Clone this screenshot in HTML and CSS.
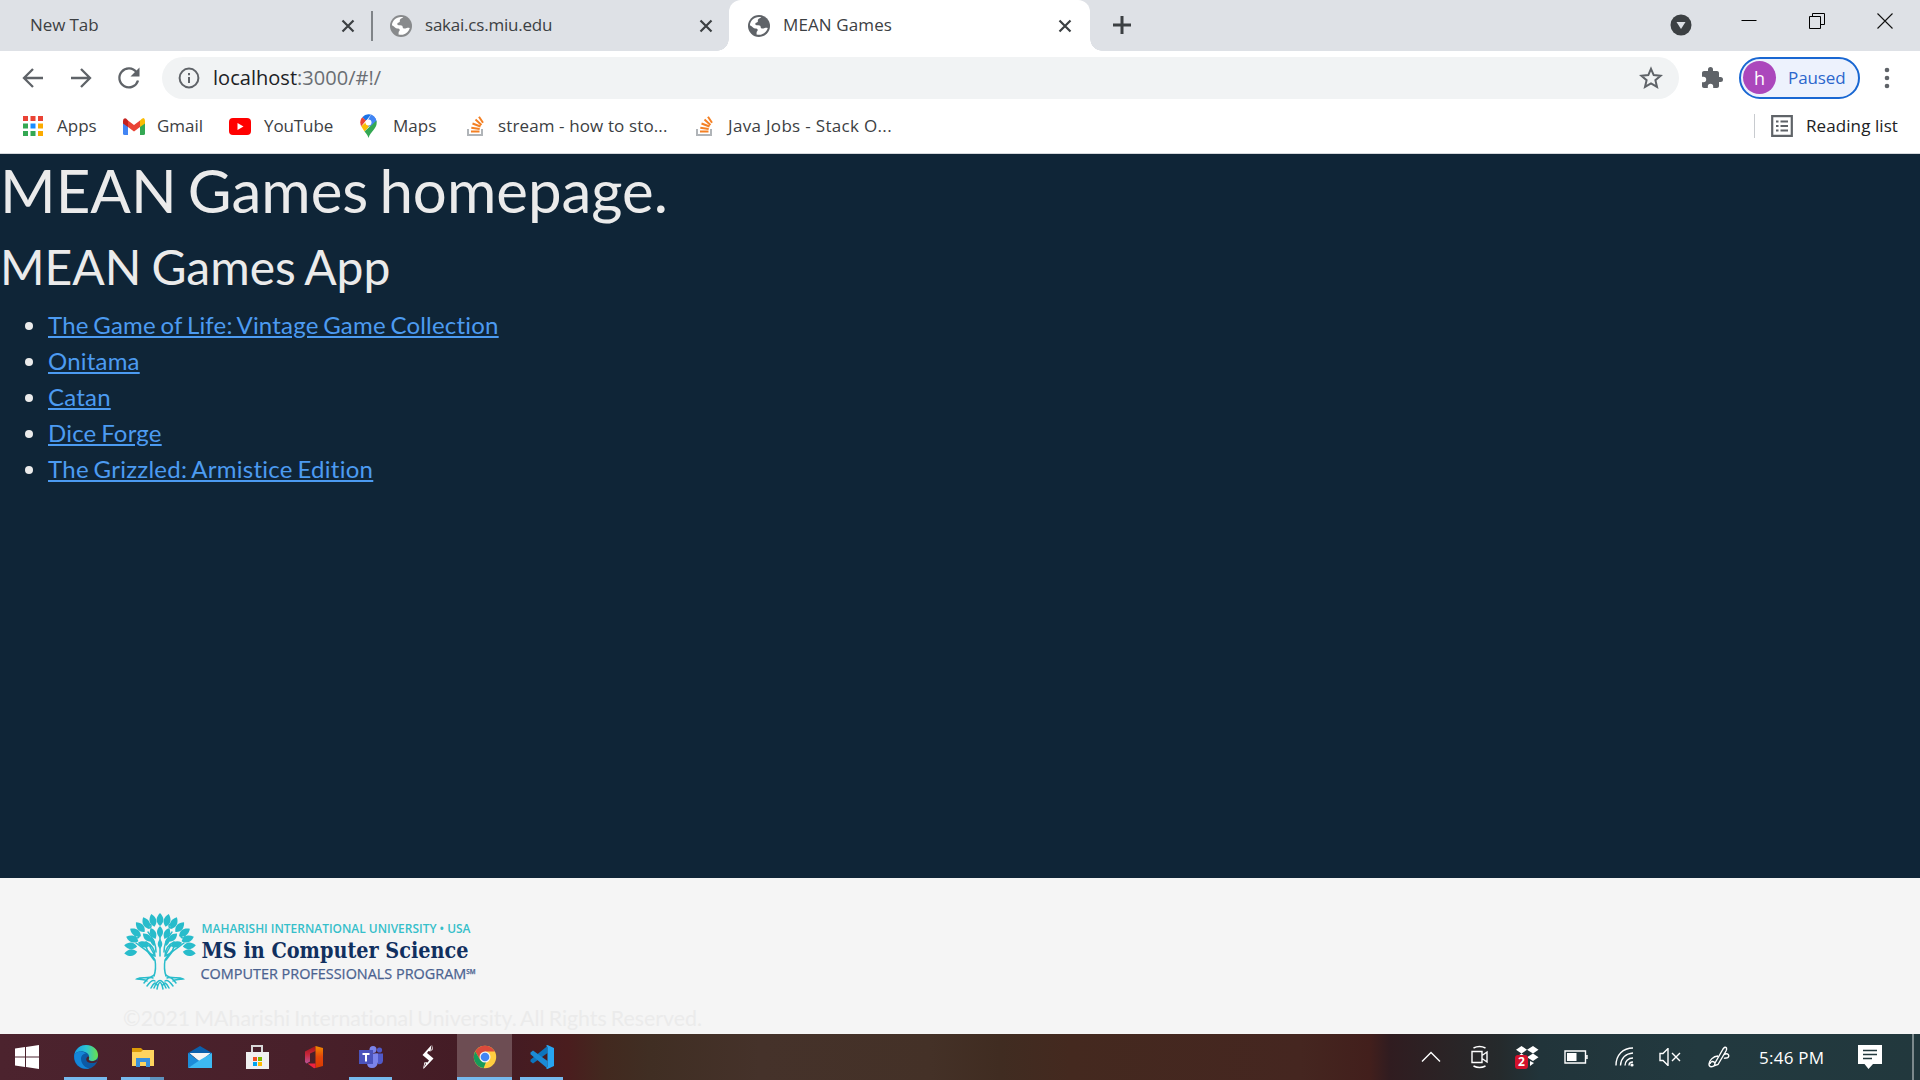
FILE: index.html
```
<!DOCTYPE html>
<html lang="en">
<head>
<meta charset="utf-8">
<title>MEAN Games</title>
<link rel="stylesheet" href="styles.css">
</head>
<body>
<svg class="defs" width="0" height="0" aria-hidden="true">
  <symbol id="globe" viewBox="0 0 24 24"><circle cx="12" cy="12" r="12" fill="currentColor"/><path class="land" d="M14.5 2.3c-1 1.500-2.700 1.500-3.500 2.500-.8 1.200.3 2-.6 2.900-.9.800-2.400.5-2.400 2 0 1.300 1.400 1.500 3.200 1.400 2 0 2.700.9 2.700 2.200 0 1.200 1 1.500 2 1.500 1.500 0 1.800-1 3.200-1 .9 0 1.800.1 2.500.3-.9 3.500-3.800 6.500-7.600 7.400-1.600.3-3.300.2-4.700-.3l.1-2.200c0-1.200 1.200-1.300 1.200-2.600 0-1.600-1.400-1.500-2.800-1.600-1.800-.1-2.200-1.300-3.500-2.200l-2.200-1.500C2.300 6.500 6.500 2.300 12 2.100c.9 0 1.700 0 2.500.2z"/></symbol>
  <symbol id="close" viewBox="0 0 14 14"><path d="M1.500 1.500l11 11M12.500 1.500l-11 11" stroke="#3c4043" stroke-width="2.200" fill="none"/></symbol>
  <symbol id="stack" viewBox="0 0 17 20"><path d="M1 13v6h14v-6" fill="none" stroke="#b0b4b8" stroke-width="2"/><path d="M4 15.500h8.500M4.300 11.700l8.400 1.200M5.500 7.500l8 3M8.500 3.500l6 5.500M12 .8l4 6" stroke="#f48024" stroke-width="2" fill="none"/></symbol>
</svg>

<header class="tabs">
  <div class="tab tab-first"><span class="tab-title">New Tab</span><svg class="x"><use href="#close"/></svg></div>
  <div class="tab tab-second"><svg class="globe faded"><use href="#globe"/></svg><span class="tab-title">sakai.cs.miu.edu</span><svg class="x"><use href="#close"/></svg></div>
  <div class="tab tab-active"><svg class="globe"><use href="#globe"/></svg><span class="tab-title">MEAN Games</span><svg class="x"><use href="#close"/></svg></div>
  <svg class="plus" viewBox="0 0 18 18"><path d="M9 0v18M0 9h18" stroke="#3c4043" stroke-width="3"/></svg>
  <div class="window-buttons">
    <svg class="search-tabs" width="22" height="22" viewBox="0 0 22 22"><circle cx="11" cy="11" r="10.500" fill="#3c4043"/><path d="M6.500 8h9L11 15z" fill="#dee1e6"/></svg>
    <svg class="caption" width="16" height="16" viewBox="0 0 16 16"><path d="M.5 7.500h15" stroke="#000"/></svg>
    <svg class="caption" width="16" height="16" viewBox="0 0 16 16"><path d="M.5 3.500h11v12H.5zM3.500 3.500v-3h12v11h-4" fill="none" stroke="#000"/></svg>
    <svg class="caption" width="16" height="16" viewBox="0 0 16 16"><path d="M.5.500l15 15M15.500.500l-15 15" stroke="#111" stroke-width="1.100"/></svg>
  </div>
</header>

<nav class="toolbar">
  <svg class="nav-icon" viewBox="0 0 24 24"><path d="M22 12H3M12 3l-9 9 9 9"/></svg>
  <svg class="nav-icon" viewBox="0 0 24 24"><path d="M2 12h19M12 3l9 9-9 9"/></svg>
  <svg class="nav-icon" viewBox="0 0 24 24"><path d="M19.500 6.200A9.500 9.500 0 1 0 21 14.500"/><path class="solid" d="M22.500 1.500v9h-9z"/></svg>
  <div class="address">
    <svg width="22" height="22" viewBox="0 0 22 22"><circle cx="11" cy="11" r="9.400" fill="none" stroke="#5f6368" stroke-width="2"/><path d="M11 10v6M11 6v2.200" stroke="#5f6368" stroke-width="2"/></svg>
    <span class="url">localhost<i>:3000/#!/</i></span>
    <svg class="star" width="24" height="24" viewBox="0 0 24 24"><path d="M12 2.800l2.700 6.300 6.900.6-5.200 4.500 1.600 6.700-6-3.600-6 3.600 1.600-6.700-5.200-4.500 6.900-.6z" fill="none" stroke="#5f6368" stroke-width="2"/></svg>
  </div>
  <svg class="puzzle" viewBox="0 0 24 24"><path fill="#5f6368" d="M20.500 11H19V7c0-1.100-.9-2-2-2h-4V3.500a2.500 2.500 0 0 0-5 0V5H4c-1.100 0-2 .9-2 2v3.800h1.500a2.700 2.700 0 0 1 0 5.400H2V20c0 1.100.9 2 2 2h3.800v-1.500a2.700 2.700 0 0 1 5.400 0V22H17c1.100 0 2-.9 2-2v-4h1.500a2.500 2.500 0 0 0 0-5z"/></svg>
  <div class="profile"><span class="avatar">h</span><span class="paused">Paused</span></div>
  <svg class="menu" viewBox="0 0 6 22"><circle cx="3" cy="3" r="2.300"/><circle cx="3" cy="11" r="2.300"/><circle cx="3" cy="19" r="2.300"/></svg>
</nav>

<nav class="bookmarks">
  <a class="bm bm-apps"><svg width="20" height="20" viewBox="0 0 20 20"><path fill="#ea4335" d="M0 0h5v5H0zM7.500 0h5v5h-5zM15 0h5v5h-5z"/><path fill="#34a853" d="M0 7.500h5v5H0zM0 15h5v5H0zM7.500 15h5v5h-5z"/><path fill="#1a8cff" d="M7.500 7.500h5v5h-5z"/><path fill="#fbab00" d="M15 7.500h5v5h-5zM15 15h5v5h-5z"/></svg><span>Apps</span></a>
  <a class="bm bm-gmail"><svg width="22" height="17" viewBox="0 0 22 17"><path fill="#4285f4" d="M0 3h5v14H1.500Q0 17 0 15.500z"/><path fill="#34a853" d="M17 5h5v10.500q0 1.500-1.500 1.500H17z"/><path fill="#fbbc04" d="M17 2.500Q19 0 20.500 0 22 .5 22 3v2.500L17 9z"/><path fill="#ea4335" d="M5 2.500l6 4.500 6-4.500V9l-6 4.500L5 9z"/><path fill="#c5221f" d="M0 3Q0 .5 2 .2 3 0 5 2.500V9L0 5.500z"/></svg><span>Gmail</span></a>
  <a class="bm bm-youtube"><svg width="22" height="17" viewBox="0 0 22 17"><rect width="22" height="17" rx="4" fill="#f00"/><path d="M8.500 5v7l6-3.500z" fill="#fff"/></svg><span>YouTube</span></a>
  <a class="bm bm-maps"><svg width="17" height="24" viewBox="0 0 17 24"><path fill="#fbbc04" d="M1.200 12.200L12 3l3 3L4.500 17.500z"/><path fill="#4285f4" d="M8.500 8.500L13.500 2q3 2.500 3 6l-8 5z"/><path fill="#34a853" d="M16.600 7.500c1 7-6 10-8.100 16.500-.8-3-2.200-4.500-4-6.500L16.300 6.500z"/><path fill="#4285f4" d="M11 .6q3.500.9 5.300 5.900L10.500 12l-3-5z"/><path fill="#1a73e8" d="M2.300 3.200A8.200 8.200 0 0 1 11 .6L6 7z"/><path fill="#ea4335" d="M2.300 3.200L6 6.500 1.200 12.200C-.2 9-.1 6 2.300 3.200z"/><circle cx="8.500" cy="8.500" r="3" fill="#fff"/></svg><span>Maps</span></a>
  <a class="bm bm-stream"><svg width="17" height="20"><use href="#stack"/></svg><span>stream - how to sto...</span></a>
  <a class="bm bm-java"><svg width="17" height="20"><use href="#stack"/></svg><span>Java Jobs - Stack O...</span></a>
  <a class="reading"><svg width="22" height="22" viewBox="0 0 22 22"><path d="M1.200 1.200h19.600v19.600H1.200z" fill="none" stroke="#5f6368" stroke-width="2.200"/><path d="M5 6.500h2.500M5 11h2.500M5 15.500h2.500M9.500 6.500H17M9.500 11H17M9.500 15.500H17" stroke="#5f6368" stroke-width="2"/></svg><span>Reading list</span></a>
</nav>

<main class="page">
  <h1>MEAN Games homepage.</h1>
  <h2>MEAN Games App</h2>
  <ul>
    <li><a href="#">The Game of Life: Vintage Game Collection</a></li>
    <li><a href="#">Onitama</a></li>
    <li><a href="#">Catan</a></li>
    <li><a href="#">Dice Forge</a></li>
    <li><a href="#">The Grizzled: Armistice Edition</a></li>
  </ul>
</main>

<footer class="footer">
  <svg class="logo" width="420" height="80" viewBox="0 0 420 80">
    <g fill="none" stroke="#28bccb" stroke-width="1.500" stroke-linecap="round">
      <path d="M31 64c2-6 2-10 1-16-4-8-14-13-19-17M43 64c-2-6-2-10-1-16 4-8 14-13 19-17M31 48l-6-8M43 48l6-8M37 44V16M33 40c0-8-3-14-8-20M41 40c0-8 3-14 8-20"/>
      <path d="M31 63c-5 5-12 1-17 4 5 1 8 0 10 2M43 63c5 5 12 1 17 4-5 1-8 0-10 2M21 71q5-7 9-5M24 74q5-7 8-5M28 76q4-8 6-3M53 71q-5-7-9-5M50 74q-5-7-8-5M46 76q-4-8-6-3M34 77q3-13 6 0M31 76q6-15 12 0"/>
      <path d="M23 30c6 3 9 8 9 14-7-2-10-8-9-14zM51 30c-6 3-9 8-9 14 7-2 10-8 9-14zM26 33l5 9M48 33l-5 9"/>
      <circle cx="26" cy="14" r="2"/><circle cx="48" cy="14" r="2"/><circle cx="14" cy="24" r="2"/><circle cx="60" cy="24" r="2"/>
    </g>
    <g fill="#28bccb">
      <path id="leaf" d="M37 14c-5-4-4-9 0-13 4 4 5 9 0 13z"/>
      <use href="#leaf" transform="rotate(-14 37 37)"/><use href="#leaf" transform="rotate(14 37 37)"/>
      <use href="#leaf" transform="rotate(-28 37 37)"/><use href="#leaf" transform="rotate(28 37 37)"/>
      <use href="#leaf" transform="rotate(-42 37 37)"/><use href="#leaf" transform="rotate(42 37 37)"/>
      <use href="#leaf" transform="rotate(-56 37 37)"/><use href="#leaf" transform="rotate(56 37 37)"/>
      <use href="#leaf" transform="rotate(-70 37 37)"/><use href="#leaf" transform="rotate(70 37 37)"/>
      <use href="#leaf" transform="rotate(-84 37 37)"/><use href="#leaf" transform="rotate(84 37 37)"/>
      <use href="#leaf" transform="rotate(-97 37 37)"/><use href="#leaf" transform="rotate(97 37 37)"/>
      <path id="inner" d="M37 26c-4-4-4-8 0-12 4 4 4 8 0 12z"/>
      <use href="#inner" transform="rotate(-24 37 37)"/><use href="#inner" transform="rotate(24 37 37)"/>
      <use href="#inner" transform="rotate(-48 37 37)"/><use href="#inner" transform="rotate(48 37 37)"/>
      <use href="#inner" transform="rotate(-74 37 37)"/><use href="#inner" transform="rotate(74 37 37)"/>
      <path d="M37 37c-3-3-3-7 0-10 3 3 3 7 0 10zM31 34c-4-3-4-6-3-9 4 2 5 6 3 9zM43 34c4-3 4-6 3-9-4 2-5 6-3 9z"/>
    </g>
    <text class="l1" x="78.500" y="20.500" textLength="269" lengthAdjust="spacingAndGlyphs">MAHARISHI INTERNATIONAL UNIVERSITY • USA</text>
    <text class="l2" x="78.500" y="46" textLength="267" lengthAdjust="spacingAndGlyphs">MS in Computer Science</text>
    <text class="l3" x="77.500" y="67" textLength="275" lengthAdjust="spacingAndGlyphs">COMPUTER PROFESSIONALS PROGRAM<tspan class="l4" dy="-5.500">SM</tspan></text>
  </svg>
  <p>©2021 MAharishi International University. All Rights Reserved.</p>
</footer>

<div class="taskbar">
  <div class="app"><svg viewBox="0 0 24 24"><path fill="#fff" d="M0 3.400l10-1.400v9.500H0zM11 1.900L24 0v11.500H11zM0 12.500h10V22L0 20.600zM11 12.500h13V24l-13-1.900z"/></svg></div>
  <div class="app running"><svg viewBox="0 0 24 24"><defs><linearGradient id="eg" x1="0" x2="1"><stop offset="0" stop-color="#1b9de2"/><stop offset=".5" stop-color="#2bc3d2"/><stop offset="1" stop-color="#6be04a"/></linearGradient></defs><circle cx="12" cy="12" r="12" fill="#0c59a4"/><path fill="url(#eg)" d="M.3 9.500C2 3 7 0 12 0c7 0 12 4.500 12 10 0 4-3 6-6 6-2.500 0-4-1-3.500-2.200 1-1 1-4-1.500-5.800C8.500 5 3 6 .3 9.500z"/><path fill="#1586d8" d="M.3 9.500C4 5 9 6 12 8.500 7 9 6 14 8 18c1.500 3 4 5 7.500 5.500C7 25.500-1 19 .3 9.500z"/><path fill="#4b222d" d="M15 13.500c-1 1.500.8 2.700 3.200 2.700 2 0 3.800-.8 5.500-2.200-.3 1-.6 2-1.200 2.900-3 1.800-10 1.500-10.300-2.400 0-1.500 1-3 2-3 .8 0 1.300 1 .8 2z"/></svg></div>
  <div class="app running multi"><svg viewBox="0 0 24 24"><path fill="#dc9b08" d="M1 3h9l2 2v3H1z"/><path fill="#ffd45e" d="M1 7h9l2-2h11v16H1z"/><path fill="#3a91dc" d="M5 13h14v9h-4v-5H9v5H5z"/></svg></div>
  <div class="app"><svg viewBox="0 0 24 24"><path fill="#0b60ac" d="M0 8l12-7 12 7v3H0z"/><path fill="#f5f5f5" d="M1.500 8h21L12 17z"/><path fill="#1c8cd8" d="M0 8l12 8.500L0 23z"/><path fill="#3db9f2" d="M24 8v15H0l12-8z"/></svg></div>
  <div class="app"><svg viewBox="0 0 24 24"><path d="M7 8V1h10v7" fill="none" stroke="#d8d8d8" stroke-width="2"/><path fill="#f0f0f0" d="M1 7h23v17H1z"/><path fill="#f25022" d="M8 12h4v4H8z"/><path fill="#7fba00" d="M13 12h4v4h-4z"/><path fill="#00a4ef" d="M8 17h4v4H8z"/><path fill="#ffb900" d="M13 17h4v4h-4z"/></svg></div>
  <div class="app"><svg viewBox="0 0 24 24"><defs><linearGradient id="of" x1="0" y1="0" x2="0" y2="1"><stop offset="0" stop-color="#a31318"/><stop offset=".5" stop-color="#c9283c"/><stop offset="1" stop-color="#b8549a"/></linearGradient><linearGradient id="og" x1="0" y1="0" x2="0" y2="1"><stop offset="0" stop-color="#f28b00"/><stop offset=".5" stop-color="#e2450a"/><stop offset="1" stop-color="#d83b01"/></linearGradient></defs><path fill="url(#of)" d="M3 6.500L13.500 1v5L8 8.500v8L4.500 18.500 3 17z"/><path fill="url(#og)" d="M13.500 1l7.500 2v18l-7.500 2z"/><path fill="#ee2240" d="M5.500 18.500h8V23L12 23.300z"/></svg></div>
  <div class="app running"><svg viewBox="0 0 24 24"><circle cx="14" cy="4.500" r="3.500" fill="#7b83eb"/><circle cx="20.500" cy="5" r="2.600" fill="#5059c9"/><path fill="#5059c9" d="M16 8.500h8V16q-1 4-5 3z"/><path fill="#7b83eb" d="M8 8.500h11V17q-1 6-6 6t-5-5z"/><path fill="#4b53bc" d="M0 5h14v14H0z"/><path d="M3.500 9h7M7 9v7.500" stroke="#fff" stroke-width="2" fill="none"/></svg></div>
  <div class="app"><svg viewBox="0 0 24 24"><path fill="#fff" d="M15.500 0l-1 6.500L12.500 6 11 8l6.500 5.500L7.500 24l2-7 2 .5 1.500-2-6.500-5.500zM17 0l-2 6 1.500-1zM8.500 17L7 24l3-5z"/></svg></div>
  <div class="app running active"><svg viewBox="0 0 24 24"><circle cx="12" cy="12" r="11.200" fill="#ffcd40"/><path fill="#db4a3b" d="M2.300 6.400A11.200 11.200 0 0 1 21.700 6.400H12L7 14.500z"/><path fill="#169a5a" d="M2.300 6.400L7.200 15l5.800 2-2.300 6.100A11.200 11.200 0 0 1 2.300 6.400z"/><circle cx="12" cy="12" r="5.500" fill="#f4f4f4"/><circle cx="12" cy="12" r="4.300" fill="#4285f4"/></svg></div>
  <div class="app running"><svg viewBox="0 0 24 24"><path fill="#0d75bd" d="M17.500 1v7L3 18.500.5 16.500v-1.800z"/><path fill="#1b8bd5" d="M.5 7.500L3 5.500 17.500 16v7.500L.5 9.300z"/><path fill="#27a5f2" d="M17.500 0L24 3v18l-6.500 3-1.500-.7 1.500-1.200V2L16 .7z"/></svg></div>
  <div class="tray">
    <svg class="t-up" viewBox="0 0 20 12"><path d="M1 10.500l9-9 9 9"/></svg>
    <svg class="t-meet" viewBox="0 0 18 24"><path d="M1 6.500h10v11H1zM11 10.500L16 7v10l-5-3.500M2.500 3q6-3 12 0M2.500 21q6 3 12 0"/></svg>
    <span class="t-drop"><svg viewBox="0 0 24 20"><path class="fill" d="M6.500 0l5.500 3.800-5.500 3.700L1 3.800zM18 0l5.500 3.800L18 7.500l-6-3.700zM18 7.500l5.500 3.800L18 15l-6-3.700zM6.500 7.500l5.500 3.800L6.500 15 1 11.300zM15 15l4 2-4 3z"/></svg><b>2</b></span>
    <svg class="t-bat" viewBox="0 0 24 14"><path d="M1 1h20.500v12H1zM23 5v4"/><path class="fill" d="M3 3h9.500v8H3z"/></svg>
    <svg class="t-wifi" viewBox="0 0 20 20"><path d="M1 18.500C1 8 8 1 18 1M5.500 18.500C6 11 11 6.500 18 6M10 18.500c0-4 3-7.500 8-7.500M14 18.500c0-2 1-3.500 4-3.500"/><circle class="fill" cx="17" cy="18" r="1.600"/></svg>
    <svg class="t-vol" viewBox="0 0 22 18"><path d="M1 5.500h3l5-5v17l-5-5H1zM13 5l8 8M21 5l-8 8"/></svg>
    <svg class="t-pen" viewBox="0 0 22 22"><path d="M7 17L15 3q2-3 3.500-1 .5 1-.5 3L10 18.500l-3.500 1.200zM16 8.500c4-2 6 1 4 3-1 1-3 0-4 1M10 10c-5 0-9 5-9 8 0 4 4 3 6 1M7 17c-2-3-5-1-5 1"/></svg>
    <span class="clock">5:46 PM</span>
    <svg class="t-note" viewBox="0 0 24 24"><path class="fill" d="M0 0h24v19h-9l-4.500 5-4-5H0z"/><path class="lines" d="M5 5.500h14M5 9.500h14M5 13.500h9"/></svg>
    <span class="desktop-edge"></span>
  </div>
</div>
</body>
</html>
```
FILE: styles.css
```
* { box-sizing: border-box; }
body {
  margin: 0; width: 1920px; height: 1080px; overflow: hidden;
  display: flex; flex-direction: column;
  font-family: "Open Sans", "Noto Sans", sans-serif; font-size: 17px; color: #3c4043;
}
svg { display: block; flex: none; }
.defs { position: absolute; }
span { white-space: nowrap; }

.tabs { height: 51px; flex: none; display: flex; align-items: center; background: #dee1e6; }
.tab { display: flex; align-items: center; height: 51px; }
.tab-title { flex: 1; line-height: 24px; margin-top: -2px; letter-spacing: -.1px; }
.tab-second .tab-title { letter-spacing: -.22px; }
.tab-active .tab-title { letter-spacing: .12px; }
.x { width: 14px; height: 14px; }
.globe { width: 22px; height: 22px; margin-right: 13px; color: #5f6368; }
.land { fill: #fff; }
.faded { color: #888a8c; }
.faded, .faded .land { fill: #dee1e6; }
.tab-first { width: 373px; padding: 0 18px 0 30px; background: linear-gradient(#808488, #808488) right center / 2px 30px no-repeat; }
.tab-second { width: 356px; padding: 0 16px 0 17px; }
.tab-active { width: 361px; padding: 0 18px 0 19px; background: #fff; border-radius: 12px 12px 0 0; position: relative; }
.tab-active::before, .tab-active::after { content: ""; position: absolute; bottom: 0; width: 12px; height: 12px; }
.tab-active::before { left: -12px; background: radial-gradient(circle at 0 0, transparent 11.500px, #fff 12px); }
.tab-active::after { right: -12px; background: radial-gradient(circle at 100% 0, transparent 11.500px, #fff 12px); }
.plus { width: 18px; height: 18px; margin-left: 23px; margin-top: -1px; }
.window-buttons { margin-left: auto; display: flex; align-items: center; padding-right: 27px; gap: 52px; }
.search-tabs { margin-top: -1px; }
.window-buttons .caption { margin-top: -9px; }
.window-buttons .caption:nth-child(2) { margin-left: -3px; }

.toolbar { height: 54px; flex: none; background: #fff; display: flex; align-items: center; padding: 0 0 0 21px; }
.nav-icon { width: 24px; height: 24px; margin-right: 24px; margin-top: -1px; fill: none; stroke: #5f6368; stroke-width: 2.300; }
.nav-icon .solid { fill: #5f6368; stroke: none; }
.nav-icon:nth-child(3) { margin-right: 21px; }
.address { width: 1517px; height: 42px; border-radius: 21px; background: #f1f3f4; display: flex; align-items: center; padding: 0 16px; }
.url { font-size: 20px; margin-left: 13px; color: #202124; letter-spacing: .03px; line-height: 28px; }
.url i { font-style: normal; color: #6a6e73; }
.star { margin-left: auto; }
.puzzle { width: 24px; height: 24px; margin-left: 21px; }
.profile { margin-left: 15px; width: 121px; height: 42px; border: 2px solid #1967d2; border-radius: 21px; background: #edf2fd; display: flex; align-items: center; padding-left: 2px; color: #2b66cc; }
.avatar { width: 33px; height: 33px; margin-top: -1px; border-radius: 50%; background: #ab47bc; color: #fff; display: grid; place-items: center; font-size: 18px; }
.paused { margin: -2px 0 0 12px; letter-spacing: -.1px; }
.menu { width: 6px; height: 22px; margin-left: 24px; fill: #5f6368; }

.bookmarks { height: 49px; flex: none; background: #fff; border-bottom: 1px solid #d5d8dc; display: flex; align-items: center; padding: 0 22px 6px 23px; }
.bookmarks span { margin-top: -2px; }
.bm { display: flex; align-items: center; }
.bm-apps { width: 100px; gap: 14px; }
.bm-gmail { width: 106px; gap: 12px; letter-spacing: -.05px; }
.bm-youtube { width: 131px; gap: 13px; letter-spacing: -.1px; }
.bm-maps { width: 107px; gap: 16px; }
.bm-stream { width: 229px; gap: 14px; letter-spacing: .12px; }
.bm-java { gap: 15px; letter-spacing: .32px; }
.reading { margin-left: auto; display: flex; align-items: center; gap: 13px; height: 24px; padding-left: 16px; border-left: 1px solid #c8cbcf; color: #202124; letter-spacing: .08px; }

.page { flex: 1; background: #0f2537; color: #ebebeb; font-family: Lato, sans-serif; font-size: 24px; line-height: 1.5; font-variant-ligatures: none; }
.page h1, .page h2 { margin: 0 0 12px; font-weight: 400; line-height: 1.2; }
.page h1 { font-size: 60px; word-spacing: -4.300px; }
.page h2 { font-size: 48px; margin-bottom: 11px; word-spacing: -2.300px; }
.page ul { margin: 0; padding-left: 48px; word-spacing: -1.700px; letter-spacing: .2px; }
.page li:last-child { letter-spacing: .27px; }
.page a { color: #4c9bf1; }

.footer { height: 156px; flex: none; background: #f5f5f5; padding: 34px 123px 0; overflow: hidden; }
.footer p { margin: 8px 0 0; font: 21.300px/36px Lato, sans-serif; color: #ebebeb; white-space: nowrap; word-spacing: -1.400px; letter-spacing: .02px; font-variant-ligatures: none; }
.logo text { font-family: "Open Sans", sans-serif; }
.logo .l1 { font-size: 13px; font-weight: 600; fill: #35bfca; }
.logo .l2 { font-family: "DejaVu Serif Condensed", "DejaVu Serif", serif; font-stretch: condensed; font-weight: 700; font-size: 22px; fill: #11305f; }
.logo .l3 { font-size: 15px; fill: #4a6290; stroke: #4a6290; stroke-width: .25px; }
.logo .l4 { font-size: 6.500px; font-weight: 600; }

.taskbar { height: 46px; flex: none; display: flex; background: linear-gradient(90deg, #4c232e 0, #48202a 300px, #431b24 500px, #4a1d1e 568px, #42291f 605px, #402e23 650px, #45322a 760px, #443127 930px, #402c21 1000px, #44291f 1070px, #452620 1300px, #421f1c 1370px, #301c20 1390px, #2a2426 1450px, #252a2c 1500px, #21343a 1540px, #22393f 1700px, #22383d 1920px); }
.app { width: 57px; height: 46px; display: grid; place-items: center; position: relative; }
.app svg { width: 24px; height: 24px; }
.app:nth-child(1) { padding-right: 3px; }
.app.running { background: linear-gradient(#76b9ed, #76b9ed) center bottom / 43px 3px no-repeat; }
.app.multi { background: linear-gradient(90deg, #76b9ed 29px, #5e92bd 29px) center bottom / 43px 3px no-repeat; }
.app.active { background: linear-gradient(#76b9ed, #76b9ed) center bottom / 55px 3px no-repeat, linear-gradient(#6d4d53, #6d4d53) center / 55px 46px no-repeat; }
.tray { margin-left: auto; display: flex; align-items: center; color: #fff; }
.tray svg { fill: none; stroke: #fff; stroke-width: 1.400; }
.tray .fill { fill: #fff; stroke: none; }
.t-up { width: 20px; height: 12px; }
.t-meet { width: 18px; height: 24px; margin-left: 30px; }
.t-drop { width: 24px; height: 24px; margin-left: 26px; position: relative; }
.t-drop svg { width: 24px; height: 20px; margin-top: 1px; }
.t-drop b { position: absolute; left: 0; top: 10px; width: 13px; height: 14px; border-radius: 3px; background: #d3122c; font-size: 12px; line-height: 14px; text-align: center; }
.t-bat { width: 24px; height: 14px; margin-left: 25px; }
.t-wifi { width: 20px; height: 20px; margin-left: 27px; }
.t-vol { width: 22px; height: 18px; margin-left: 24px; }
.t-pen { width: 22px; height: 22px; margin-left: 27px; }
.clock { font-size: 17px; width: 66px; margin-left: 29px; letter-spacing: .25px; }
.t-note { width: 24px; height: 24px; margin-left: 33px; }
.tray .lines { stroke: #22383d; }
.desktop-edge { width: 2px; height: 46px; background: #7c898c; margin: 0 6px 0 30px; }
```
